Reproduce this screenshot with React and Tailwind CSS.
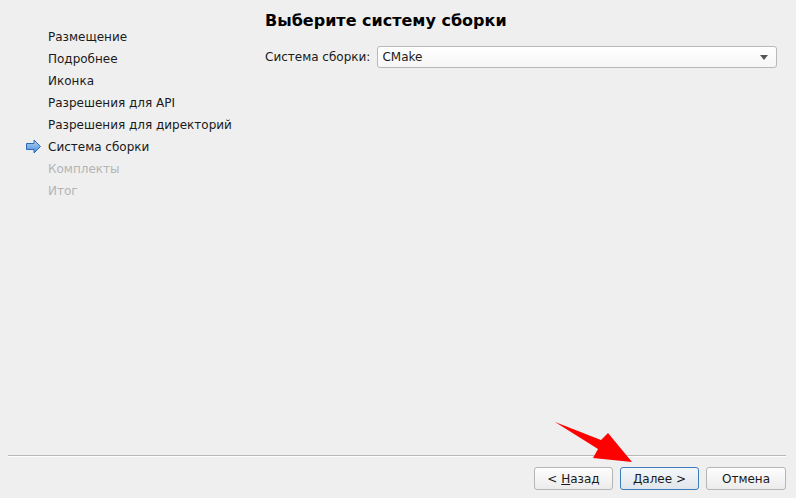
import React from "react";

const steps = [
  { label: "Размещение", done: true },
  { label: "Подробнее", done: true },
  { label: "Иконка", done: true },
  { label: "Разрешения для API", done: true },
  { label: "Разрешения для директорий", done: true },
  { label: "Система сборки", done: true, current: true },
  { label: "Комплекты", done: false },
  { label: "Итог", done: false },
];

function StepArrow() {
  return (
    <svg width="17" height="15" viewBox="0 0 17 15" className="absolute left-[-23px] top-[3px]">
      <defs>
        <linearGradient id="blueg" x1="0" y1="0" x2="0" y2="1">
          <stop offset="0" stopColor="#b3d4f7" />
          <stop offset="1" stopColor="#4a8bd9" />
        </linearGradient>
      </defs>
      <path
        d="M1.5 4.5 H9 V1 L15.5 7.5 L9 14 V10.5 H1.5 Z"
        fill="url(#blueg)"
        stroke="#3068b3"
        strokeWidth="1"
        strokeLinejoin="round"
      />
    </svg>
  );
}

export default function App() {
  return (
    <div
      className="relative w-[796px] h-[498px] bg-[#efefef] text-[12px] text-[#1a1a1a] overflow-hidden flex flex-col"
      style={{ fontFamily: '"DejaVu Sans", Verdana, sans-serif' }}
    >
      <div className="flex flex-1">
        {/* steps sidebar */}
        <div className="w-[257px] pl-[48px] pt-[26px] flex flex-col">
          {steps.map((s) => (
            <div
              key={s.label}
              className={`relative h-[22px] leading-[22px] ${s.done ? "text-[#1a1a1a]" : "text-[#b4b4b4]"}`}
            >
              {s.current && <StepArrow />}
              {s.label}
            </div>
          ))}
        </div>

        {/* page */}
        <div className="flex-1 pl-[8px] pr-[19px] pt-[10px]">
          <h1 className="text-[16px] font-bold leading-[22px] text-black">Выберите систему сборки</h1>
          <div className="mt-[14px] flex items-center">
            <span className="mr-[7px]">Система сборки:</span>
            <div className="flex-1 h-[22px] flex items-center justify-between rounded-[3px] border border-[#b9b9b9] bg-gradient-to-b from-white to-[#f6f6f6] pl-[4px] pr-[8px]">
              <span>CMake</span>
              <svg width="8" height="5" viewBox="0 0 8 5">
                <path d="M0 0 H8 L4 5 Z" fill="#555" />
              </svg>
            </div>
          </div>
        </div>
      </div>

      {/* bottom */}
      <div className="ml-[8px] mr-[10px] h-[2px] border-t border-[#b8b8b8] border-b-white border-b" />
      <div className="flex justify-end gap-[7px] pr-[10px] pt-[10px] pb-[8px]">
        <button className="w-[79px] h-[23px] rounded-[3px] border border-[#b5b5b5] bg-gradient-to-b from-[#fdfdfd] to-[#ececec] text-[12px] text-[#1a1a1a]">
          &lt; <span className="underline">Н</span>азад
        </button>
        <button className="w-[79px] h-[23px] rounded-[3px] border border-[#3d7cba] bg-gradient-to-b from-[#f4f7fa] to-[#e1e6ec] text-[12px] text-[#1a1a1a]">
          <span className="underline">Д</span>алее &gt;
        </button>
        <button className="w-[80px] h-[23px] rounded-[3px] border border-[#b5b5b5] bg-gradient-to-b from-[#fdfdfd] to-[#ececec] text-[12px] text-[#1a1a1a]">
          Отмена
        </button>
      </div>

      {/* red annotation arrow */}
      <svg className="absolute left-0 top-0 pointer-events-none" width="796" height="498">
        <polygon
          points="555,422 601,440 608,433 632,462 593,458 598,449"
          fill="#ff0000"
        />
      </svg>
    </div>
  );
}
